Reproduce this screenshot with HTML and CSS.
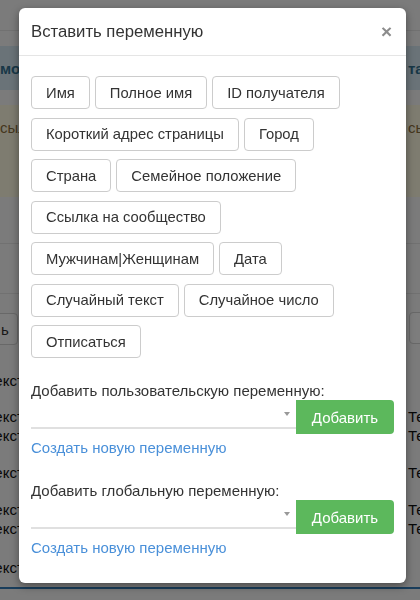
FILE: index.html
```html
<!DOCTYPE html>
<html>
	<head>
		<meta charset="utf-8">
		<meta name="viewport" content="width=device-width, initial-scale=1.0">
		<title>Вставить переменную</title>
		<link rel="stylesheet" href="styles.css">
	</head>
	<body>
		<!-- page under the dialog -->
		<div class="page">
			<div class="topbar"></div>
			<div class="alert alert-info">
				<span class="left">мо</span>
				<span class="right">так</span>
			</div>
			<div class="alert alert-warning">
				<span class="left">сыл</span>
				<span class="right">сыл</span>
			</div>
			<div class="rule-row"></div>
			<div class="rule-row short"></div>
			<div class="toolbar">
				<span class="tool-btn tool-left">ь</span>
				<span class="tool-btn tool-right"></span>
			</div>
			<div class="bg-row" style="height: 38px">
				<span class="left">Текст</span>
				<span class="right"></span>
			</div>
			<div class="bg-row" style="height: 54px">
				<span class="left">Текст<br>Текст</span>
				<span class="right">Текст<br>Текст</span>
			</div>
			<div class="bg-row" style="height: 38px">
				<span class="left">Текст</span>
				<span class="right">Текст</span>
			</div>
			<div class="bg-row" style="height: 56px">
				<span class="left">Текст<br>Текст</span>
				<span class="right">Текст<br>Текст</span>
			</div>
			<div class="bg-row last" style="height: 40px">
				<span class="left">Текст</span>
				<span class="right"></span>
			</div>
		</div>
		<div class="backdrop"></div>

		<div class="modal">
			<div class="modal-header">
				<h4 class="modal-title">Вставить переменную</h4>
				<span class="close">&times;</span>
			</div>
			<div class="modal-body">
				<div class="var-buttons">
					<button class="btn">Имя</button>
					<button class="btn">Полное имя</button>
					<button class="btn">ID получателя</button>
					<button class="btn">Короткий адрес страницы</button>
					<button class="btn">Город</button>
					<button class="btn">Страна</button>
					<button class="btn">Семейное положение</button>
					<button class="btn">Ссылка на сообщество</button>
					<button class="btn">Мужчинам|Женщинам</button>
					<button class="btn">Дата</button>
					<button class="btn">Случайный текст</button>
					<button class="btn">Случайное число</button>
					<button class="btn">Отписаться</button>
				</div>

				<div class="var-block">
					<label class="var-label">Добавить пользовательскую переменную:</label>
					<div class="input-group">
						<div class="select"><span class="caret"></span></div>
						<button class="btn-success">Добавить</button>
					</div>
					<a href="#" class="create-link">Создать новую переменную</a>
				</div>

				<div class="var-block second">
					<label class="var-label">Добавить глобальную переменную:</label>
					<div class="input-group">
						<div class="select"><span class="caret"></span></div>
						<button class="btn-success">Добавить</button>
					</div>
					<a href="#" class="create-link">Создать новую переменную</a>
				</div>
			</div>
		</div>
	</body>
</html>
```

FILE: styles.css
```css
html, body {
	margin: 0;
	height: 100%;
	overflow: hidden;
}
body {
	background: #f7f7f7;
	font-family: "Liberation Sans", Arial, sans-serif;
	font-size: 15px;
	color: #333;
}

/* page behind the backdrop */
.page {
	width: 420px;
}
.topbar {
	height: 30px;
	border-bottom: 1px solid #e2e2e2;
	margin-bottom: 15px;
}
.alert {
	display: flex;
	justify-content: space-between;
	align-items: center;
	font-weight: bold;
	white-space: nowrap;
}
.alert-info {
	height: 44px;
	background: #d4e6f1;
	color: #31708f;
	margin-bottom: 15px;
}
.alert-warning {
	height: 92px;
	align-items: flex-start;
	background: #fdf9e1;
	color: #8a6d3b;
	font-weight: normal;
}
.alert-warning span {
	margin-top: 14px;
}
.rule-row {
	height: 46px;
	border-bottom: 1px solid #e2e2e2;
}
.rule-row.short {
	height: 49px;
}
.toolbar {
	height: 67px;
	display: flex;
	justify-content: space-between;
	align-items: center;
}
.tool-btn {
	height: 32px;
	border: 1px solid #d0d0d0;
	border-radius: 4px;
	background: #fafafa;
	display: flex;
	align-items: center;
	box-sizing: border-box;
}
.tool-left {
	width: 40px;
	margin-left: -22px;
	padding-left: 22px;
	margin-top: 3px;
}
.tool-right {
	width: 40px;
	margin-right: -29px;
}
.bg-row {
	display: flex;
	justify-content: space-between;
	align-items: center;
	line-height: 19px;
	white-space: nowrap;
	color: #111;
}
.bg-row.last {
	border-bottom: 2px solid #337ab7;
}
.left {
	margin-left: -14px;
}
.alert .left {
	margin-left: 0;
}
.right {
	width: 12px;
}
.backdrop {
	position: fixed;
	inset: 0;
	background: rgba(0, 0, 0, .5);
}

/* dialog */
.modal {
	position: absolute;
	top: 8px;
	left: 19px;
	width: 387px;
	background: #fff;
	border-radius: 6px;
	box-shadow: 0 3px 9px rgba(0, 0, 0, .4);
}
.modal-header {
	display: flex;
	justify-content: space-between;
	align-items: center;
	padding: 14px 14px 14px 12px;
	border-bottom: 1px solid #e5e5e5;
}
.modal-title {
	margin: 0;
	font-size: 16.7px;
	font-weight: normal;
	line-height: 19px;
	color: #333;
}
.close {
	font-size: 19px;
	font-weight: bold;
	line-height: 19px;
	color: #8c8c8c;
}
.modal-body {
	padding: 20px 12px 26px 12px;
}
.var-buttons {
	display: flex;
	flex-wrap: wrap;
	gap: 8.5px 5px;
}
.btn {
	height: 33px;
	padding: 0 14px;
	border: 1px solid #ccc;
	border-radius: 4px;
	background: #fff;
	font-family: inherit;
	font-size: 14.8px;
	color: #333;
}
.var-block {
	margin-top: 24px;
}
.var-block.second {
	margin-top: 25px;
}
.var-label {
	display: block;
	line-height: 18px;
}
.input-group {
	display: flex;
	align-items: flex-start;
}
.select {
	flex: 1;
	height: 29px;
	border-bottom: 2px solid #e0e0e0;
	box-sizing: border-box;
	display: flex;
	align-items: center;
	justify-content: flex-end;
	padding-right: 6px;
}
.caret {
	width: 0;
	height: 0;
	border-left: 3.5px solid transparent;
	border-right: 3.5px solid transparent;
	border-top: 4px solid #999;
}
.btn-success {
	width: 98px;
	height: 34px;
	border: none;
	border-radius: 0 4px 4px 0;
	background: #5cb85c;
	color: #fff;
	font-family: inherit;
	font-size: 15px;
}
.create-link {
	display: block;
	margin-top: 5px;
	line-height: 18px;
	color: #4a90d9;
	text-decoration: none;
}
```
